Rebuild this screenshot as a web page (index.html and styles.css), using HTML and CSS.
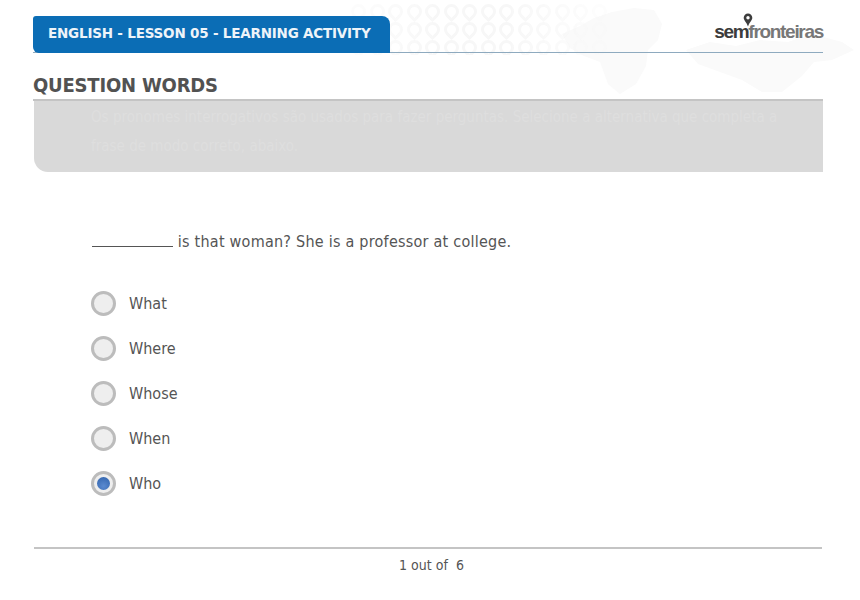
FILE: index.html
```html
<!DOCTYPE html>
<html lang="en">
<head>
<meta charset="UTF-8" />
<meta name="viewport" content="width=device-width, initial-scale=1" />
<title>Question Words</title>
<link rel="stylesheet" href="styles.css">
</head>
<body>

<div class="page">
  <svg class="map" viewBox="0 0 320 100" aria-hidden="true">
    <path d="M12 34 L30 26 L44 18 L62 12 L84 8 L104 10 L112 24 L108 40 L98 50 L96 66 L86 84 L70 94 L58 84 L50 62 L34 56 L20 48 Z" />
    <path d="M136 50 L160 42 L186 46 L210 40 L238 42 L262 34 L292 42 L304 50 L282 60 L264 62 L252 76 L232 92 L212 92 L192 80 L170 72 L148 64 Z" />
  </svg>

  <div class="pins">
    <span></span><span></span><span></span><span></span><span></span><span></span><span></span><span></span><span></span><span></span><span></span><span></span><span></span><span></span>
    <span></span><span></span><span></span><span></span><span></span><span></span><span></span><span></span><span></span><span></span><span></span><span></span><span></span><span></span>
    <span></span><span></span><span></span><span></span><span></span><span></span><span></span><span></span><span></span><span></span><span></span><span></span><span></span><span></span>
  </div>

  <header class="top">
    <div class="tab">ENGLISH - LESSON 05 - LEARNING ACTIVITY</div>
    <div class="logo">
      <svg class="logo-pin" viewBox="0 0 10 14" aria-hidden="true">
        <path d="M5 0.5 A4.3 4.3 0 0 1 9.3 4.8 C9.3 7.5 6.5 9 5 13.5 C3.5 9 0.7 7.5 0.7 4.8 A4.3 4.3 0 0 1 5 0.5 Z" />
        <circle cx="5" cy="4.8" r="1.7" fill="#fff" />
      </svg>
      <span class="logo-text"><b>sem</b>fronteiras</span>
    </div>
  </header>

  <h1 class="title">QUESTION WORDS</h1>
  <div class="instructions">
    <p>Os pronomes interrogativos são usados para fazer perguntas. Selecione a alternativa que completa a</p>
    <p>frase de modo correto, abaixo.</p>
  </div>

  <main class="activity">
    <p class="question"><span class="blank"></span> is that woman? She is a professor at college.</p>

    <div class="options">
      <div class="option"><span class="radio"></span>What</div>
      <div class="option"><span class="radio"></span>Where</div>
      <div class="option"><span class="radio"></span>Whose</div>
      <div class="option"><span class="radio"></span>When</div>
      <div class="option"><span class="radio checked"></span>Who</div>
    </div>
  </main>

  <footer class="pager">1 out of&nbsp; 6</footer>
</div>

</body>
</html>
```

FILE: styles.css
```css
body {
  margin: 0;
  background: #fff;
  font-family: "DejaVu Sans", Verdana, sans-serif;
  font-stretch: condensed;
  color: #555;
}

.page {
  position: relative;
  width: 790px;
  height: 600px;
  margin-left: 33px;
  padding-top: 16px;
  box-sizing: border-box;
}

.map {
  position: absolute;
  top: 0;
  left: 517px;
  width: 320px;
  height: 100px;
  fill: #fafafa;
}

.pins {
  position: absolute;
  top: 4px;
  left: 318px;
  display: grid;
  grid-template-columns: repeat(14, 15px);
  gap: 3px 3.5px;
  -webkit-mask-image: linear-gradient(to right, rgba(0, 0, 0, 0.3), #000 35%, #000 60%, rgba(0, 0, 0, 0.2));
  mask-image: linear-gradient(to right, rgba(0, 0, 0, 0.3), #000 35%, #000 60%, rgba(0, 0, 0, 0.2));
}

.pins span {
  width: 15px;
  height: 15px;
  box-sizing: border-box;
  border: 3px solid #f7f7f7;
  border-radius: 50% 50% 50% 0;
  transform: rotate(-45deg);
}

.top {
  position: relative;
  display: flex;
  justify-content: space-between;
  align-items: flex-end;
  height: 37px;
  box-sizing: border-box;
  border-bottom: 1px solid #8eaabf;
}

.tab {
  display: flex;
  align-items: center;
  height: 37px;
  padding: 0 19px 3px 15px;
  box-sizing: border-box;
  margin-bottom: -1px;
  background: #0b6db5;
  color: #eef4f9;
  font-size: 13.5px;
  font-weight: bold;
  font-stretch: normal;
  letter-spacing: -0.2px;
  border-radius: 3px 8px 0 6px;
}

.logo {
  position: relative;
  height: 36px;
  display: flex;
  align-items: flex-end;
  padding-bottom: 12px;
  box-sizing: border-box;
}

.logo-pin {
  position: absolute;
  top: -3px;
  left: 29px;
  width: 10px;
  height: 14px;
  fill: #3d3d3d;
}

.logo-text {
  font-family: "Liberation Sans", Arial, sans-serif;
  font-size: 19px;
  font-weight: bold;
  line-height: 17px;
  letter-spacing: -1.3px;
  color: #777;
}

.logo-text b {
  color: #3c3c3c;
}

.title {
  position: relative;
  margin: 0;
  padding-top: 20px;
  height: 48px;
  box-sizing: border-box;
  border-bottom: 2px solid #c4c4c4;
  font-size: 20px;
  line-height: 24px;
  color: #525252;
  letter-spacing: -0.2px;
}

.instructions {
  height: 71px;
  margin-left: 1px;
  padding: 2px 22px 0 57px;
  box-sizing: border-box;
  background: #d9d9d9;
  border-bottom-left-radius: 14px;
  color: #dedede;
  font-size: 15px;
  line-height: 29px;
}

.instructions p {
  margin: 0;
  white-space: nowrap;
}

.activity {
  padding: 58px 0 0 59px;
}

.question {
  margin: 0 0 34px;
  font-size: 16px;
  line-height: 24px;
  letter-spacing: 0.24px;
}

.blank {
  display: inline-block;
  width: 81px;
  height: 15px;
  border-bottom: 1px solid #555;
  vertical-align: baseline;
}

.options {
  display: flex;
  flex-direction: column;
  gap: 15px;
  margin-left: -1px;
}

.option {
  display: flex;
  align-items: center;
  gap: 13px;
  height: 30px;
  font-size: 16px;
}

.radio {
  position: relative;
  flex: none;
  width: 19px;
  height: 19px;
  border: 3px solid #bcbcbc;
  border-radius: 50%;
  background: #eeeeee;
}

.radio.checked::after {
  content: "";
  position: absolute;
  top: 3px;
  left: 3px;
  width: 13px;
  height: 13px;
  border-radius: 50%;
  background: radial-gradient(circle at 50% 70%, #5b8ad0, #2f62ab);
}

.pager {
  position: absolute;
  top: 547px;
  left: 1px;
  right: 1px;
  padding: 7px 0 0 7px;
  border-top: 2px solid #c4c4c4;
  text-align: center;
  font-size: 14px;
  line-height: 18px;
}
```
